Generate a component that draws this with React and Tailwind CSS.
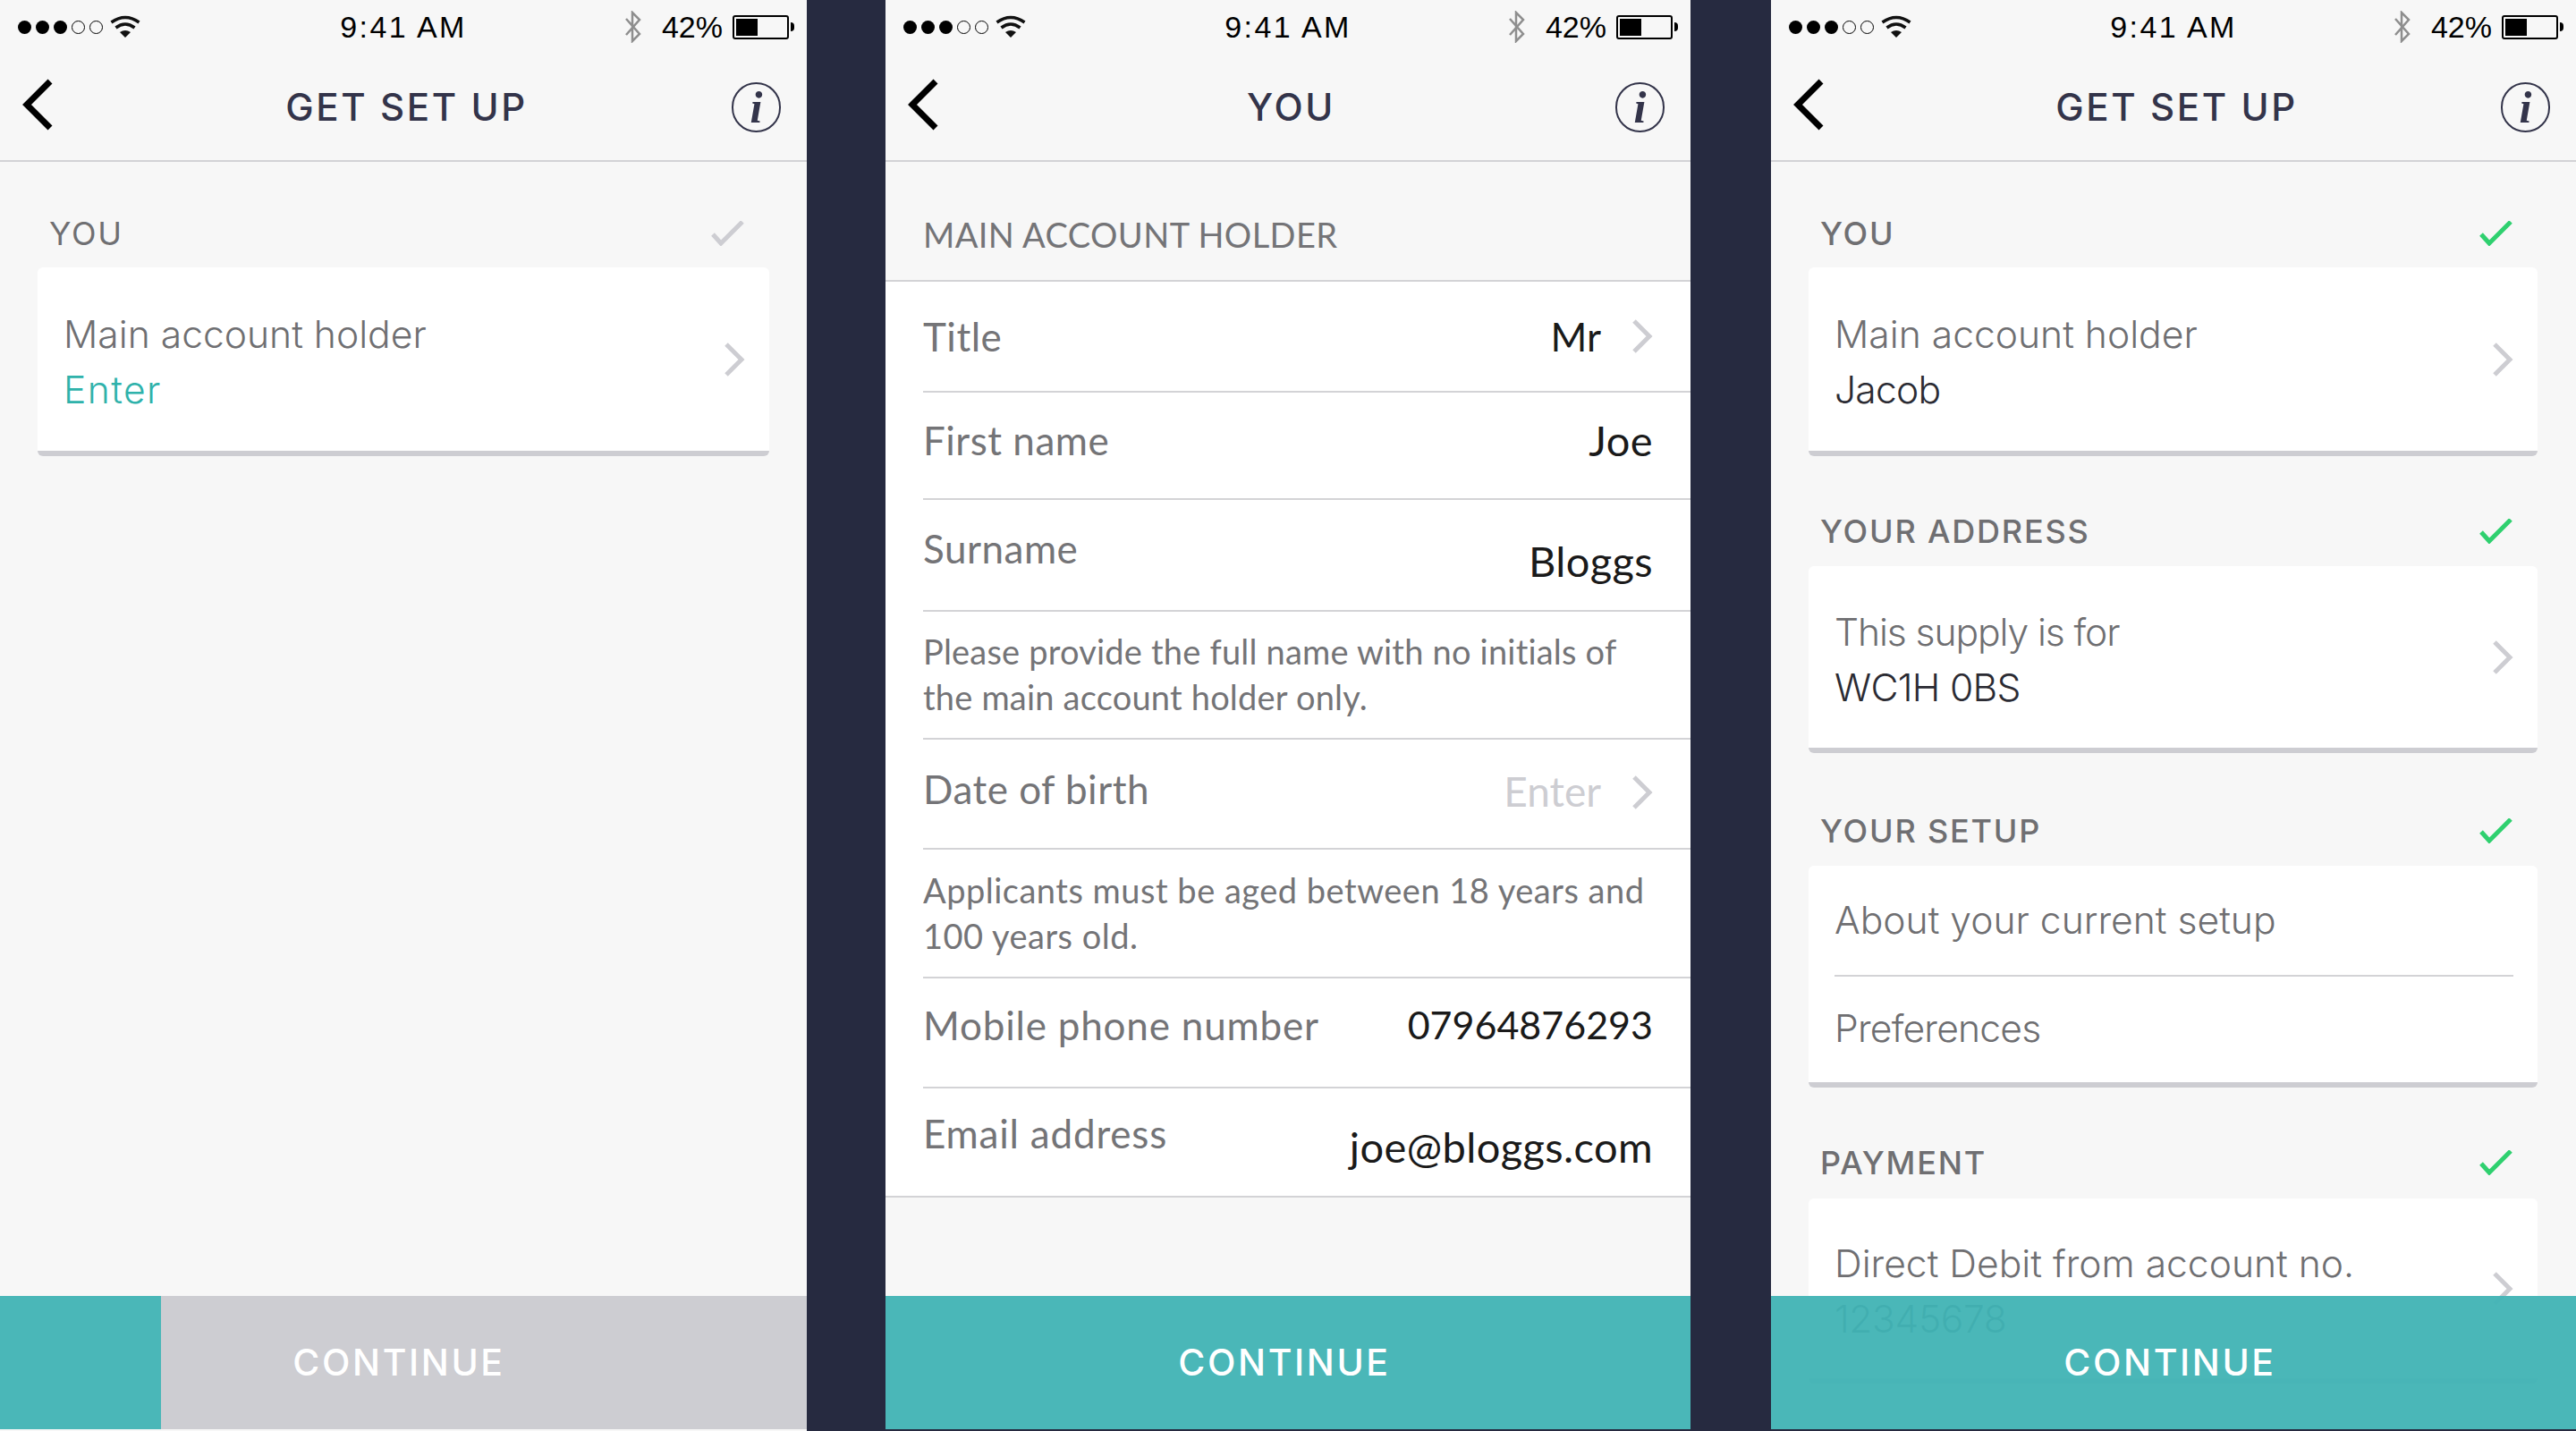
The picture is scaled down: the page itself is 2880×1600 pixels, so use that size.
const gotham = 'font-["Inter",sans-serif]';
const avenir = 'font-["Lato",sans-serif]';

const Chevron = ({ className = '' }) => (
  <svg viewBox="0 0 24 38" className={`w-[24px] h-[38px] shrink-0 ${className}`}>
    <path d="M3 2 L20 19 L3 36" fill="none" stroke="#cdcdd2" strokeWidth="5" />
  </svg>
);

const Check = ({ color }) => (
  <svg viewBox="0 0 38 28" className="w-[38px] h-[28px]">
    <path d="M2 15 L11 25 L35 1" fill="none" stroke={color} strokeWidth="5" />
  </svg>
);

const StatusBar = () => (
  <div className='h-[60px] flex items-center font-["Liberation_Sans",sans-serif] text-[34px] text-black'>
    {/* signal */}
    <div className="flex-1 basis-0 flex items-center">
      <div className="flex gap-[5px] ml-[20px]">
        <div className="w-[15px] h-[15px] rounded-full bg-black" />
        <div className="w-[15px] h-[15px] rounded-full bg-black" />
        <div className="w-[15px] h-[15px] rounded-full bg-black" />
        <div className="w-[15px] h-[15px] rounded-full border border-black" />
        <div className="w-[15px] h-[15px] rounded-full border border-black" />
      </div>
      <svg viewBox="0 0 34 26" className="w-[34px] h-[26px] ml-[8px]">
        <path d="M1.5 8 Q17 -3 32.5 8" fill="none" stroke="#111" strokeWidth="3.5" />
        <path d="M6.5 14 Q17 6 27.5 14" fill="none" stroke="#111" strokeWidth="3.5" />
        <path d="M11 19 L17 25 L23 19 Q17 15 11 19 Z" fill="#111" />
      </svg>
    </div>
    <div className="tracking-[2.4px] leading-none">9:41 AM</div>
    <div className="flex-1 basis-0 flex items-center justify-end">
      <svg viewBox="0 0 20 36" className="w-[20px] h-[36px] mr-[22px]">
        <path d="M2 9 L17 26 L9 34 L9 2 L17 10 L2 27" fill="none" stroke="#8e8e8e" strokeWidth="2.5" />
      </svg>
      <span className="leading-none">42%</span>
      {/* battery */}
      <div className="w-[63px] h-[27px] ml-[11px] rounded-[3px] border-2 border-black p-[2px]">
        <div className="w-[24px] h-full bg-black" />
      </div>
      <div className="w-[4px] h-[10px] ml-[2px] mr-[14px] bg-black rounded-r-full" />
    </div>
  </div>
);

const NavBar = ({ title }) => (
  <div className="h-[121px] flex items-center border-b-2 border-[#d3d3d6] pl-[36px] pr-[29px]">
    <div className="flex-1 basis-0">
      <svg viewBox="0 0 34 58" className="w-[34px] h-[58px] -mt-[6px] -ml-[11px]">
        <path d="M31 3 L5 29 L31 55" fill="none" stroke="#000" strokeWidth="7" />
      </svg>
    </div>
    <div className={`${gotham} text-[42px] font-medium tracking-[2.6px] text-[#33344a] leading-none`}>{title}</div>
    <div className="flex-1 basis-0 flex justify-end">
      <div className='w-[55px] h-[56px] rounded-full border-[2.5px] border-[#33344a] flex items-center justify-center font-["Liberation_Serif",serif] italic font-bold text-[50px] text-[#33344a] leading-none'>
        i
      </div>
    </div>
  </div>
);

const Footer = ({ disabled }) =>
  disabled ? (
    <div className="absolute left-0 right-0 top-[1449px] h-[149px] flex">
      <div className="w-[180px] bg-[#4ab7b8]" />
      <div className={`flex-1 bg-[#cdcdd2] flex items-center justify-center pr-[190px] ${gotham} text-[41px] font-medium tracking-[2.6px] text-white`}>
        CONTINUE
      </div>
    </div>
  ) : (
    <div className={`absolute left-0 right-0 top-[1449px] h-[149px] bg-[#43b4b5]/96 flex items-center justify-center pr-[8px] ${gotham} text-[41px] font-medium tracking-[2.6px] text-white`}>
      CONTINUE
    </div>
  );

const Label = ({ text, color, strong, className = '' }) => (
  <div className={`flex items-center justify-between pl-[13px] pr-[27px] h-[28px] ${className}`}>
    <span className={`${gotham} text-[36px] ${strong ? 'font-medium' : ''} text-[#6f6f72] tracking-[1.8px] leading-none`}>{text}</span>
    <Check color={color} />
  </div>
);

const Card = ({ children, className = '' }) => (
  <div className={`bg-white rounded-[6px] border-b-[6px] border-[#cdcdd2] flex items-center ${className}`}>
    {children}
  </div>
);

const CardLines = ({ first, second, firstClass = '', secondClass }) => (
  <div className={`flex-1 pt-[7px] ${gotham} text-[42.6px] font-light leading-[62px] text-[#6f6f72]`}>
    <div className={firstClass}>{first}</div>
    <div className={secondClass}>{second}</div>
  </div>
);

const ScreenOne = () => (
  <div className="w-[902px] h-[1600px] bg-[#f7f7f7] relative overflow-hidden shrink-0">
    <StatusBar />
    <NavBar title="GET SET UP" />
    <div className="pl-[42px] pr-[42px] pt-[66px]">
      <Label text="YOU" color="#cdcdd2" />
      <Card className="h-[211px] mt-[24px] pl-[29px] pr-[27px]">
        <CardLines first="Main account holder" second="Enter" secondClass="text-[#2fb2ab] tracking-[1.4px]" />
        <Chevron />
      </Card>
    </div>
    <Footer disabled />
  </div>
);

const Row = ({ label, value, chevron, h, labelClass = '', valueClass = 'text-[#1a1a1a]', rightClass = '' }) => (
  <div className={`flex items-center justify-between ${h} border-b-2 border-[#d3d3d6] pr-[42px]`}>
    <span className={`text-[#747477] tracking-[0.5px] ${labelClass}`}>{label}</span>
    <span className={`flex items-center gap-[34px] ${rightClass}`}>
      <span className={valueClass}>{value}</span>
      {chevron && <Chevron />}
    </span>
  </div>
);

const Hint = ({ h, children }) => (
  <div className={`${h} flex items-center border-b-2 border-[#d3d3d6] text-[38px] leading-[51px] text-[#747477]`}>
    <div>{children}</div>
  </div>
);

const ScreenTwo = () => (
  <div className="w-[900px] h-[1598px] ml-[88px] bg-[#f7f7f7] relative overflow-hidden shrink-0">
    <StatusBar />
    <NavBar title="YOU" />
    <div className={`h-[132px] pl-[42px] pt-[30px] flex items-center ${avenir} text-[38px] tracking-[0.4px] text-[#747477]`}>
      MAIN ACCOUNT HOLDER
    </div>
    <div className={`bg-white border-y-2 border-[#d3d3d6] pl-[42px] ${avenir} text-[44px] leading-none`}>
      <Row label="Title" value="Mr" chevron h="h-[124px]" />
      <Row
        label="First name"
        value="Joe"
        h="h-[120px]"
        labelClass="-mt-[12px]"
        valueClass="text-[#1a1a1a] text-[47px] tracking-[0.4px] -mt-[12px] block"
      />
      <Row
        label="Surname"
        value="Bloggs"
        h="h-[125px]"
        labelClass="-mt-[16px]"
        valueClass="text-[#1a1a1a] text-[47px] tracking-[0.4px] mt-[14px] block"
      />
      <Hint h="h-[143px]">
        <div className="-mt-[2px] tracking-[0.2px]">
          Please provide the full name with no initials of
          <br />
          the main account holder only.
        </div>
      </Hint>
      <Row
        label="Date of birth"
        value="Enter"
        chevron
        h="h-[123px]"
        labelClass="-mt-[12px]"
        rightClass="-mt-[4px]"
        valueClass="text-[#cdcdd2] text-[46px] -mt-[2px] block"
      />
      <Hint h="h-[144px]">
        <div className="tracking-[0.5px]">
          Applicants must be aged between 18 years and
          <br />
          100 years old.
        </div>
      </Hint>
      <Row
        label="Mobile phone number"
        value="07964876293"
        h="h-[123px]"
        labelClass="-mt-[18px] tracking-[0.8px]"
        valueClass="text-[#1a1a1a] text-[43px] -mt-[18px] block"
      />
      <div className="flex items-center justify-between h-[120px] pr-[42px]">
        <span className="text-[#747477] tracking-[0.8px] -mt-[20px]">Email address</span>
        <span className="text-[#1a1a1a] text-[47px] tracking-[0.4px] mt-[10px]">joe@bloggs.com</span>
      </div>
    </div>
    <Footer />
  </div>
);

const ScreenThree = () => (
  <div className="w-[900px] h-[1598px] ml-[90px] bg-[#f7f7f7] relative overflow-hidden shrink-0">
    <StatusBar />
    <NavBar title="GET SET UP" />
    <div className="pl-[42px] pr-[43px] pt-[66px]">
      <Label text="YOU" strong color="#2fd06f" />
      <Card className="h-[211px] mt-[24px] pl-[29px] pr-[27px]">
        <CardLines first="Main account holder" second="Jacob" secondClass="text-[#2b2b33] -tracking-[0.8px]" />
        <Chevron />
      </Card>
      <Label text="YOUR ADDRESS" strong color="#2fd06f" className="mt-[70px]" />
      <Card className="h-[209px] mt-[25px] pl-[29px] pr-[27px]">
        <CardLines
          first="This supply is for"
          firstClass="-tracking-[1.1px]"
          second="WC1H 0BS"
          secondClass="text-[#2b2b33] -tracking-[0.7px]"
        />
        <Chevron />
      </Card>
      <Label text="YOUR SETUP" strong color="#2fd06f" className="mt-[73px]" />
      <Card className={`h-[248px] mt-[25px] pl-[29px] pr-[27px] flex-col items-stretch ${gotham} text-[42.6px] font-light text-[#6f6f72]`}>
        <div className="h-[124px] flex items-center border-b-2 border-[#d3d3d6]">About your current setup</div>
        <div className="flex-1 flex items-center -tracking-[0.8px] pb-[2px]">Preferences</div>
      </Card>
      <Label text="PAYMENT" strong color="#2fd06f" className="mt-[70px]" />
      <Card className="h-[207px] mt-[26px] pl-[29px] pr-[27px]">
        <CardLines first="Direct Debit from account no." second="12345678" secondClass="text-[#2b2b33] -tracking-[0.4px]" />
        <Chevron />
      </Card>
    </div>
    <Footer />
  </div>
);

export default function App() {
  return (
    <div className="w-[2880px] h-[1600px] flex items-start bg-[#262a40] overflow-hidden">
      <ScreenOne />
      <ScreenTwo />
      <ScreenThree />
    </div>
  );
}
